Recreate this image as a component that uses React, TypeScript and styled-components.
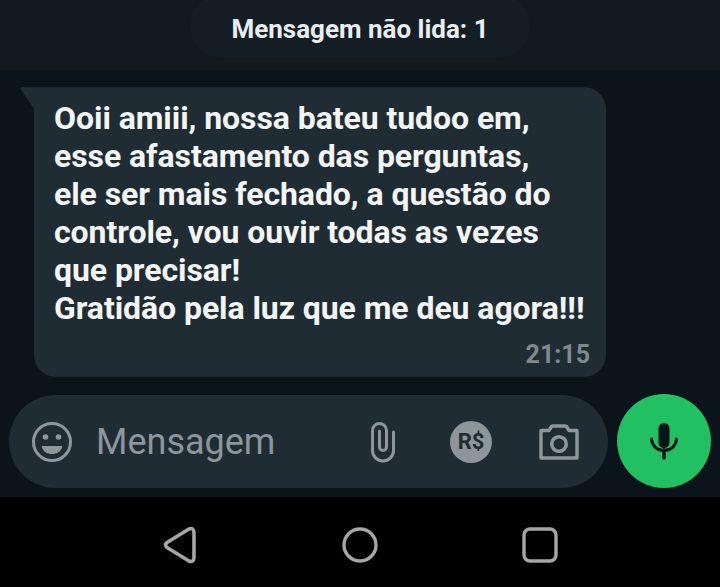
import React from 'react';
import styled, { createGlobalStyle } from 'styled-components';

const GlobalStyle = createGlobalStyle`
	html, body {
		margin: 0;
		padding: 0;
		background: #000;
	}
`;

const Screen = styled.div`
	width: 720px;
	height: 587px;
	overflow: hidden;
	display: flex;
	flex-direction: column;
	font-family: Roboto, 'Liberation Sans', sans-serif;
	background: #0b141a;
`;

const UnreadBand = styled.div`
	height: 70px;
	flex-shrink: 0;
	display: flex;
	justify-content: center;
	background: #121a20;
	overflow: hidden;
`;

const UnreadPill = styled.div`
	width: 340px;
	height: 64px;
	margin-top: -6px;
	padding-top: 5px;
	box-sizing: border-box;
	border-radius: 32px;
	background: #151e24;
	color: #e9edef;
	font-size: 26px;
	font-weight: 700;
	display: flex;
	align-items: center;
	justify-content: center;
`;

const Thread = styled.div`
	padding: 17px 0 0 34px;
	height: 325px;
	box-sizing: border-box;
	flex-shrink: 0;
`;

const Bubble = styled.div`
	position: relative;
	width: 572px;
	height: 290px;
	box-sizing: border-box;
	padding: 12px 16px 0 20px;
	background: #202c33;
	border-radius: 0 22px 22px 22px;

	&::before {
		content: '';
		position: absolute;
		left: -14px;
		top: 0;
		width: 14px;
		height: 22px;
		background: #202c33;
		clip-path: polygon(0 1px, 2px 0, 100% 0, 100% 100%);
	}
`;

const MessageText = styled.div`
	color: #f3f5f6;
	font-size: 32px;
	font-weight: 700;
	line-height: 38px;
	letter-spacing: -0.07px;
	white-space: pre;
`;

const Time = styled.div`
	margin-top: 13px;
	text-align: right;
	color: #7f898f;
	font-size: 25px;
	font-weight: 700;
	line-height: 30px;
`;

const ComposerRow = styled.div`
	height: 102px;
	flex-shrink: 0;
	box-sizing: border-box;
	padding: 0 9px;
	display: flex;
	gap: 9px;
	align-items: flex-start;
`;

const Composer = styled.div`
	width: 599px;
	height: 93px;
	border-radius: 47px;
	background: #202c33;
	display: flex;
	align-items: center;
	color: #8c969b;
`;

const Leading = styled.div`
	margin-left: 22px;
	display: flex;
`;

const Placeholder = styled.span`
	font-size: 36px;
	font-weight: 400;
	margin-left: 23px;
`;

const Actions = styled.div`
	margin-left: auto;
	margin-right: 5px;
	display: flex;
`;

const IconSlot = styled.div`
	width: 88px;
	height: 44px;
	display: flex;
	align-items: center;
	justify-content: center;
`;

const RealBadge = styled.div`
	width: 42px;
	height: 42px;
	border-radius: 50%;
	background: #8c969b;
	color: #202c33;
	font-size: 22px;
	font-weight: 700;
	display: flex;
	align-items: center;
	justify-content: center;
`;

const MicButton = styled.div`
	width: 94px;
	height: 94px;
	margin-top: -1px;
	border-radius: 50%;
	background: #21c063;
	display: flex;
	align-items: center;
	justify-content: center;
`;

const NavBar = styled.div`
	flex: 1;
	background: #000;
	display: flex;
	align-items: center;
	justify-content: center;
	gap: 144px;
	padding-top: 5px;
`;

const SmileIcon = () => (
	<svg width="42" height="42" viewBox="0 0 42 42">
		<circle cx="21" cy="21" r="18.5" fill="none" stroke="#8c969b" strokeWidth="3" />
		<circle cx="14.5" cy="16" r="2.8" fill="#8c969b" />
		<circle cx="27.5" cy="16" r="2.8" fill="#8c969b" />
		<path d="M10.5 25 H31.5 C30 31 26 33 21 33 C16 33 12 31 10.5 25 Z" fill="#8c969b" />
	</svg>
);

const ClipIcon = () => (
	<svg width="28" height="42" viewBox="0 0 28 42">
		<path
			d="M24.5 11 V29.5 A10.5 10.5 0 0 1 3.5 29.5 V9.5 A7 7 0 0 1 17.5 9.5 V26 A3.5 3.5 0 0 1 10.5 26 V10"
			fill="none"
			stroke="#8c969b"
			strokeWidth="3"
			strokeLinecap="round"
		/>
	</svg>
);

const CameraIcon = () => (
	<svg width="42" height="38" viewBox="0 0 42 38">
		<path
			d="M3 7.5 H11 L13.5 3.5 Q14 3 15 3 H27 Q28 3 28.5 3.5 L31 7.5 H39 V35 H3 Z"
			fill="none"
			stroke="#8c969b"
			strokeWidth="3.4"
			strokeLinejoin="round"
		/>
		<circle cx="21" cy="21" r="7.3" fill="none" stroke="#8c969b" strokeWidth="3.6" />
	</svg>
);

const MicIcon = () => (
	<svg width="30" height="38" viewBox="0 0 30 38">
		<rect x="9.5" y="1" width="11" height="25" rx="5.5" fill="#0b141a" />
		<path d="M2.5 17 C3 24 8 28.5 15 28.5 C22 28.5 27 24 27.5 17" fill="none" stroke="#0b141a" strokeWidth="3" strokeLinecap="round" />
		<path d="M15 28 V36" stroke="#0b141a" strokeWidth="3.4" strokeLinecap="round" />
	</svg>
);

const BackIcon = () => (
	<svg width="36" height="40" viewBox="0 0 36 40">
		<path
			d="M5 17.5 L27 4 Q31.5 2 32 7.5 V32.5 Q31.5 38 27 36 L5 22.5 Q2 20 5 17.5 Z"
			fill="none"
			stroke="#a6a6a6"
			strokeWidth="3.6"
			strokeLinejoin="round"
		/>
	</svg>
);

const HomeIcon = () => (
	<svg width="36" height="36" viewBox="0 0 36 36">
		<circle cx="18" cy="18" r="16" fill="none" stroke="#a6a6a6" strokeWidth="3.4" />
	</svg>
);

const RecentsIcon = () => (
	<svg width="36" height="36" viewBox="0 0 36 36">
		<rect x="2" y="2" width="32" height="32" rx="6" fill="none" stroke="#a6a6a6" strokeWidth="3.4" />
	</svg>
);

const message = `Ooii amiii, nossa bateu tudoo em,
esse afastamento das perguntas,
ele ser mais fechado, a questão do
controle, vou ouvir todas as vezes
que precisar!
Gratidão pela luz que me deu agora!!!`;

const App = (): React.FunctionComponentElement<JSX.Element> => {
	return (
		<Screen>
			<GlobalStyle />
			<UnreadBand>
				<UnreadPill>Mensagem não lida: 1</UnreadPill>
			</UnreadBand>
			<Thread>
				<Bubble>
					<MessageText>{message}</MessageText>
					<Time>21:15</Time>
				</Bubble>
			</Thread>
			<ComposerRow>
				<Composer>
					<Leading>
						<SmileIcon />
					</Leading>
					<Placeholder>Mensagem</Placeholder>
					<Actions>
						<IconSlot>
							<ClipIcon />
						</IconSlot>
						<IconSlot>
							<RealBadge>R$</RealBadge>
						</IconSlot>
						<IconSlot>
							<CameraIcon />
						</IconSlot>
					</Actions>
				</Composer>
				<MicButton>
					<MicIcon />
				</MicButton>
			</ComposerRow>
			<NavBar>
				<BackIcon />
				<HomeIcon />
				<RecentsIcon />
			</NavBar>
		</Screen>
	);
};

export default App;
